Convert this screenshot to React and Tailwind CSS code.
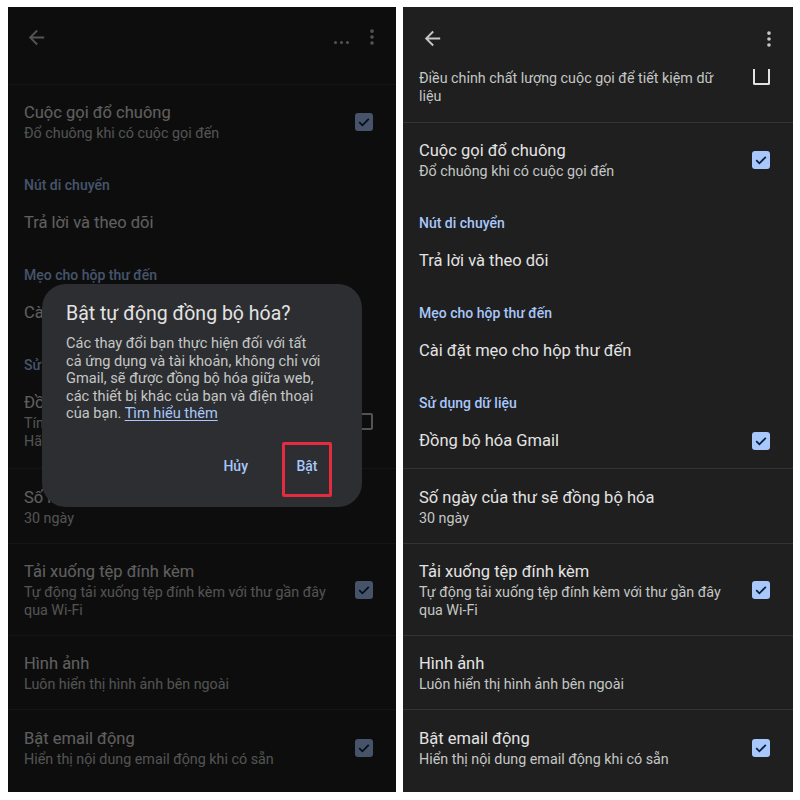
import React from "react";

const font = { fontFamily: "Roboto, 'Noto Sans', Arial, sans-serif" };

function BackArrow() {
  return (
    <svg viewBox="0 0 24 24" className="w-[23px] h-[23px] fill-[#c4c7c5]">
      <path d="M20 11H7.83l5.59-5.59L12 4l-8 8 8 8 1.41-1.41L7.83 13H20v-2z" />
    </svg>
  );
}

function MoreVert() {
  return (
    <svg viewBox="0 0 24 24" className="w-[22px] h-[22px] fill-[#c4c7c5]">
      <circle cx="12" cy="5.5" r="2" />
      <circle cx="12" cy="12" r="2" />
      <circle cx="12" cy="18.5" r="2" />
    </svg>
  );
}

function Checkbox({ state }) {
  if (state === "cut") {
    return <div className="self-start w-[17px] h-[16px] border-2 border-t-0 border-[#e3e3e3] rounded-b-[2px]" />;
  }
  if (state === "off") {
    return <div className="w-[17px] h-[17px] border-2 border-[#c4c7c5] rounded-[2px]" />;
  }
  return (
    <div className="w-[18px] h-[18px] rounded-[3px] bg-[#a8c7fa] flex items-center justify-center">
      <svg viewBox="0 0 18 18" className="w-[18px] h-[18px]">
        <polyline points="4.2,9.2 7.4,12.3 13.8,5.8" fill="none" stroke="#0a1f3f" strokeWidth="1.8" />
      </svg>
    </div>
  );
}

function Section({ children }) {
  return (
    <div className="pt-[17px] px-[16px] text-[14px] leading-[20px] font-medium text-[#a8c7fa]">
      {children}
    </div>
  );
}

function Row({ title, sub = [], check, divider, className = "pt-[17px] pb-[16px]" }) {
  return (
    <div className={`flex items-center pl-[16px] pr-[23px] ${className} ${divider ? "border-b border-[#343434]" : ""}`}>
      <div className="flex-1 min-w-0">
        {title && <div className="text-[16.5px] leading-[22px] text-[#e3e3e3]">{title}</div>}
        {sub.map((line) => (
          <div key={line} className="text-[14.3px] leading-[18px] text-[#c4c7c5] whitespace-nowrap">
            {line}
          </div>
        ))}
      </div>
      {check && <Checkbox state={check} />}
    </div>
  );
}

function CommonBottom() {
  return (
    <>
      <Row className="pt-[18px] pb-[16px]" title="Số ngày của thư sẽ đồng bộ hóa" sub={["30 ngày"]} divider />
      <Row
        title="Tải xuống tệp đính kèm"
        sub={["Tự động tải xuống tệp đính kèm với thư gần đây", "qua Wi-Fi"]}
        check="on"
        divider
      />
      <Row title="Hình ảnh" sub={["Luôn hiển thị hình ảnh bên ngoài"]} divider />
      <Row className="pt-[18px] pb-[16px]" title="Bật email động" sub={["Hiển thị nội dung email động khi có sẵn"]} check="on" />
    </>
  );
}

function LeftScreen() {
  return (
    <div className="relative w-[388px] h-[785px] bg-[#1f1f1f] overflow-hidden">
      <div className="h-[78px] border-b border-[#343434] flex items-start pt-[19px] pl-[17px] pr-[13px]">
        <BackArrow />
        <div className="flex-1" />
        <div className="flex gap-[3px] mt-[15px] mr-[12px]">
          <span className="w-[3px] h-[3px] rounded-full bg-[#c4c7c5]" />
          <span className="w-[3px] h-[3px] rounded-full bg-[#c4c7c5]" />
          <span className="w-[3px] h-[3px] rounded-full bg-[#c4c7c5]" />
        </div>
        <MoreVert />
      </div>
      <Row title="Cuộc gọi đổ chuông" sub={["Đổ chuông khi có cuộc gọi đến"]} check="on" />
      <Section>Nút di chuyển</Section>
      <Row className="pt-[17px] pb-[14px]" title="Trả lời và theo dõi" />
      <Section>Mẹo cho hộp thư đến</Section>
      <Row className="pt-[17px] pb-[14px]" title="Cài đặt mẹo cho hộp thư đến" />
      <Section>Sử dụng dữ liệu</Section>
      <Row
        className="pt-[17px] pb-[18px]"
        title="Đồng bộ hóa Gmail"
        sub={["Tính năng tự động đồng bộ hóa đang tắt.", "Hãy bật để đồng bộ hóa Gmail."]}
        check="off"
        divider
      />
      <CommonBottom />

      <div className="absolute inset-0 bg-black/[0.58]" />

      <div className="absolute left-[34px] top-[277px] w-[320px] h-[223px] rounded-[24px] bg-[#2d2e31] pl-[24px] pr-[30px] pt-[17px] pb-[10px] flex flex-col">
        <div className="text-[19.5px] leading-[26px] text-[#e3e3e3]">Bật tự động đồng bộ hóa?</div>
        <div className="mt-[8px] text-[14.6px] leading-[17.5px] text-[#c4c7c5] whitespace-nowrap">
          <div>Các thay đổi bạn thực hiện đối với tất</div>
          <div>cả ứng dụng và tài khoản, không chỉ với</div>
          <div>Gmail, sẽ được đồng bộ hóa giữa web,</div>
          <div>các thiết bị khác của bạn và điện thoại</div>
          <div>
            của bạn. <span className="text-[#a8c7fa] underline underline-offset-2">Tìm hiểu thêm</span>
          </div>
        </div>
        <div className="mt-auto flex items-center justify-end gap-[34px]">
          <span className="text-[14px] font-medium text-[#a8c7fa] -mt-[6px]">Hủy</span>
          <div className="w-[50px] h-[55px] border-[3px] border-[#e52b3f] rounded-[2px] flex items-center justify-center">
            <span className="text-[14px] font-medium text-[#a8c7fa] -mt-[6px]">Bật</span>
          </div>
        </div>
      </div>
    </div>
  );
}

function RightScreen() {
  return (
    <div className="w-[390px] h-[785px] bg-[#1f1f1f] overflow-hidden">
      <div className="h-[59px] flex items-center pl-[18px] pr-[13px] pt-[4px]">
        <BackArrow />
        <div className="flex-1" />
        <MoreVert />
      </div>
      <Row
        className="pt-[3px] pb-[17px]"
        sub={["Điều chỉnh chất lượng cuộc gọi để tiết kiệm dữ", "liệu"]}
        check="cut"
        divider
      />
      <Row title="Cuộc gọi đổ chuông" sub={["Đổ chuông khi có cuộc gọi đến"]} check="on" />
      <Section>Nút di chuyển</Section>
      <Row className="pt-[17px] pb-[14px]" title="Trả lời và theo dõi" />
      <Section>Mẹo cho hộp thư đến</Section>
      <Row className="pt-[17px] pb-[14px]" title="Cài đặt mẹo cho hộp thư đến" />
      <Section>Sử dụng dữ liệu</Section>
      <Row title="Đồng bộ hóa Gmail" check="on" divider />
      <CommonBottom />
    </div>
  );
}

export default function App() {
  return (
    <div className="w-[800px] h-[800px] bg-white flex gap-[7px] pl-[8px] pt-[7px]" style={font}>
      <LeftScreen />
      <RightScreen />
    </div>
  );
}
